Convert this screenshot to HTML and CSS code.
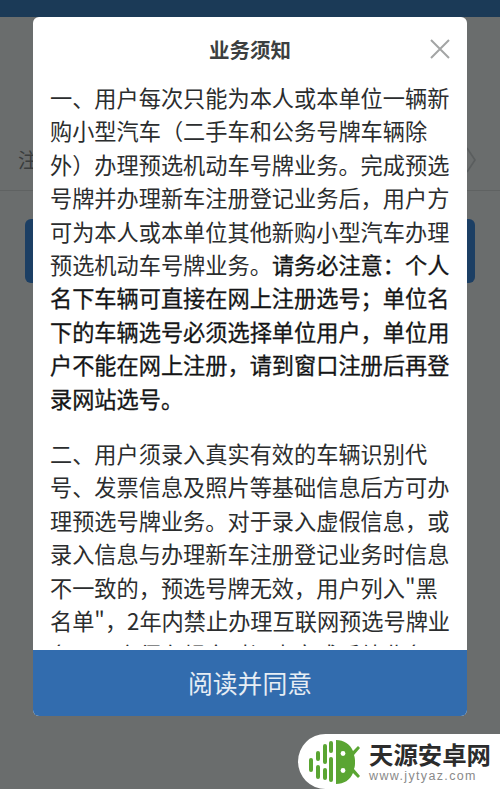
FILE: index.html
```html
<!DOCTYPE html>
<html lang="zh-CN">
<head>
<meta charset="utf-8">
<title>业务须知</title>
<link rel="stylesheet" href="styles.css">
</head>
<body>
<header class="topbar"></header>
<main class="page">
  <div class="row">
    <span class="row-label">注册</span>
    <svg class="row-chevron" width="12" height="28" viewBox="0 0 12 28"><path d="M2 2l8 12-8 12" fill="none" stroke="#5a5d5e" stroke-width="1.6"/></svg>
  </div>
  <div class="page-btn"></div>
</main>
<section class="modal">
  <div class="modal-head">
    <h1 class="modal-title">业务须知</h1>
    <svg class="modal-close" width="20" height="20" viewBox="0 0 20 20"><path d="M1 1l18 18M19 1L1 19" fill="none" stroke="#a3a5a5" stroke-width="2"/></svg>
  </div>
  <div class="modal-body">
    <p class="para">一、用户每次只能为本人或本单位一辆新购小型汽车（二手车和公务号牌车辆除外）办理预选机动车号牌业务。完成预选号牌并办理新车注册登记业务后，用户方可为本人或本单位其他新购小型汽车办理预选机动车号牌业务。<strong class="strong">请务必注意：个人名下车辆可直接在网上注册选号；单位名下的车辆选号必须选择单位用户，单位用户不能在网上注册，请到窗口注册后再登录网站选号。</strong></p>
    <p class="para">二、用户须录入真实有效的车辆识别代号、发票信息及照片等基础信息后方可办理预选号牌业务。对于录入虚假信息，或录入信息与办理新车注册登记业务时信息不一致的，预选号牌无效，用户列入"黑名单"，2年内禁止办理互联网预选号牌业务。用户须在规定时间内完成后续业务。</p>
  </div>
  <button class="modal-btn">阅读并同意</button>
</section>
<aside class="badge">
  <svg class="badge-icon" width="52" height="44" viewBox="0 0 52 44">
    <g fill="#5aa532">
      <rect x="0" y="18" width="4" height="14" rx="2"/>
      <rect x="7" y="11" width="4" height="10" rx="2"/>
      <rect x="7" y="25" width="4" height="14" rx="2"/>
      <rect x="14" y="4" width="4" height="20" rx="2"/>
      <rect x="14" y="28" width="4" height="12" rx="2"/>
      <rect x="20" y="1" width="4" height="12" rx="2"/>
      <rect x="20" y="17" width="4" height="25" rx="2"/>
      <path d="M27 0c8 0 14 4 17 11l5-5 2 2-6 7c1 3 1 5 1 7s0 5-1 7l6 7-2 2-5-5c-3 7-9 11-17 11z"/>
    </g>
    <circle cx="34" cy="13.5" r="2.4" fill="#fff"/>
    <circle cx="34" cy="30.5" r="2.4" fill="#fff"/>
  </svg>
  <div class="badge-text">
    <span class="badge-name">天源安卓网</span>
    <span class="badge-url">www.jytyaz.com</span>
  </div>
</aside>
</body>
</html>
```
FILE: styles.css
```css
* { box-sizing: border-box; }
html, body { margin: 0; height: 789px; overflow: hidden; }
body {
  position: relative;
  width: 500px;
  background: #6a6d6d;
  font-family: "Noto Sans CJK SC", "Liberation Sans", sans-serif;
}
.topbar { height: 17px; background: #1b3a57; }
.page { display: flex; flex-direction: column; }
.row {
  height: 174px;
  padding: 121px 23px 0 18px;
  display: flex;
  justify-content: space-between;
  border-bottom: 1px solid #5f6262;
}
.row-label { font-size: 20px; line-height: 44px; color: #3a3d3e; }
.row-chevron { margin-top: 8px; }
.page-btn {
  margin: 28px 25px 0;
  height: 64px;
  border-radius: 6px;
  background: #1c3f64;
}
.modal {
  position: absolute;
  left: 33px;
  top: 17px;
  width: 434px;
  height: 699px;
  display: flex;
  flex-direction: column;
  background: #fff;
  border-radius: 6px;
  overflow: hidden;
}
.modal-head {
  position: relative;
  flex: none;
  height: 64px;
  display: flex;
  align-items: center;
  justify-content: center;
}
.modal-title {
  margin: 0;
  font-size: 20.5px;
  font-weight: 700;
  color: #3c3f40;
}
.modal-close { position: absolute; right: 17px; top: 22px; }
.modal-body {
  flex: 1;
  min-height: 0;
  overflow: hidden;
  margin-bottom: 4px;
  padding: 0 16px 0 17px;
}
.para {
  margin: 0 0 22px;
  font-size: 22.2px;
  line-height: 33.4px;
  color: #2b2d2e;
}
.strong {
  font-weight: 400;
  color: #141516;
  -webkit-text-stroke: 0.3px #141516;
}
.modal-btn {
  flex: none;
  height: 66px;
  border: 0;
  padding: 0 0 2px;
  background: #326cae;
  color: #e6edf4;
  font: 400 24.8px "Noto Sans CJK SC", "Liberation Sans", sans-serif;
}
.badge {
  position: absolute;
  right: 0;
  top: 734px;
  width: 202px;
  height: 55px;
  padding-left: 11px;
  display: flex;
  align-items: center;
  gap: 8px;
  background: #fff;
  border-radius: 28px 0 0 28px;
}
.badge-icon { flex: none; }
.badge-text { display: flex; flex-direction: column; }
.badge-name {
  font-size: 24.4px;
  line-height: 30px;
  font-weight: 700;
  color: #2c2c2c;
  white-space: nowrap;
}
.badge-url {
  font-family: "Liberation Sans", sans-serif;
  font-size: 12.5px;
  line-height: 15px;
  letter-spacing: 1.35px;
  color: #8a8a8a;
  white-space: nowrap;
}
```
